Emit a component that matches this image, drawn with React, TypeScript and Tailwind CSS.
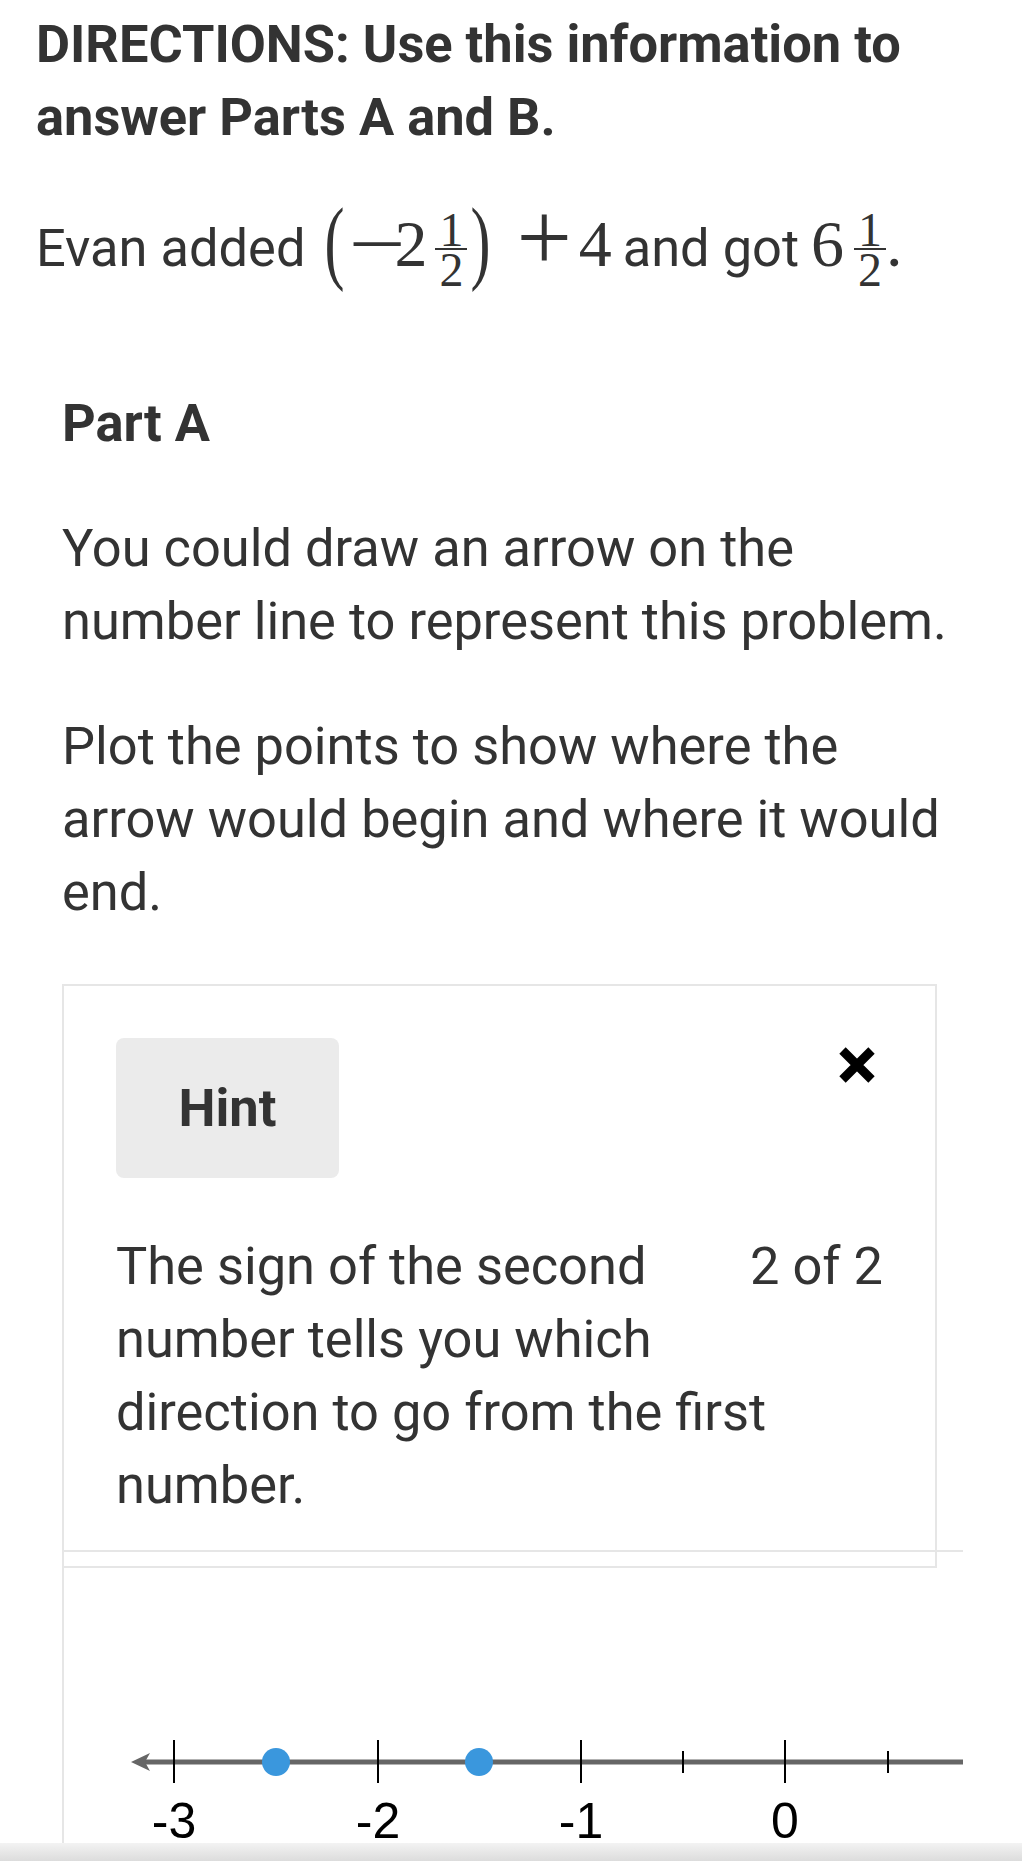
function Frac({ n, d, className }: { n: string; d: string; className: string }) {
  return (
    <span
      className={`inline-flex -mb-[6px] flex-col items-center align-[20px] font-['Liberation_Serif',serif] text-[48px] leading-[36px] ${className}`}
    >
      <span className="px-[4px]">{n}</span>
      <span className="h-[2px] w-full bg-[#333]" />
      <span className="mt-[2px] px-[4px]">{d}</span>
    </span>
  );
}

function CloseIcon() {
  return (
    <svg width="36" height="36" viewBox="0 0 36 36" className="mt-[9px] mr-[8px] shrink-0">
      <path d="M3.5 3.5 L32.5 32.5 M32.5 3.5 L3.5 32.5" stroke="#000" strokeWidth="9" />
    </svg>
  );
}

function NumberLine() {
  const major = [
    { x: 110, label: "-3" },
    { x: 314, label: "-2" },
    { x: 517, label: "-1" },
    { x: 721, label: "0" },
  ];
  const minor = [619, 824];
  return (
    <svg width="899" height="291" viewBox="0 0 899 291" overflow="visible" className="block">
      <line x1="78" y1="210" x2="899" y2="210" stroke="#666" strokeWidth="5" />
      <path d="M67 210 L86 201 L81 210 L86 219 Z" fill="#666" />
      {major.map((t) => (
        <g key={t.label}>
          <line x1={t.x} y1="188" x2={t.x} y2="231" stroke="#000" strokeWidth="2" />
          <text
            x={t.x}
            y="286"
            textAnchor="middle"
            fontFamily="'Liberation Sans', Arial, sans-serif"
            fontSize="50"
            fill="#000"
          >
            {t.label}
          </text>
        </g>
      ))}
      {minor.map((x) => (
        <line key={x} x1={x} y1="199" x2={x} y2="221" stroke="#000" strokeWidth="2" />
      ))}
      <circle cx="212" cy="210" r="14" fill="#3a97dd" />
      <circle cx="415" cy="210" r="14" fill="#3a97dd" />
    </svg>
  );
}

export default function App() {
  return (
    <div className="flex h-[1861px] flex-col overflow-hidden bg-white font-['Roboto',sans-serif] text-[#333]">
      <div className="px-[36px] pt-[8px]">
        <h1 className="text-[52.4px] font-bold leading-[73px]">
          DIRECTIONS: Use this information to answer Parts A and B.
        </h1>
        <p className="mt-[57px] h-[73px] whitespace-nowrap text-[52.4px] leading-[73px]">
          Evan added
          <span className="ml-[19px] inline-block align-[5px] scale-y-[1.55] font-['Liberation_Serif',serif] text-[60px] leading-none">
            (
          </span>
          <span className="ml-[11px] inline-block translate-y-[4px] scale-x-[1.3] font-['Liberation_Serif',serif] text-[78px] leading-[0]">
            −
          </span>
          <span className="-ml-[5px] font-['Liberation_Serif',serif] text-[66px] leading-[0]">2</span>
          <Frac n="1" d="2" className="ml-[8px]" />
          <span className="ml-[3px] inline-block align-[5px] scale-y-[1.55] font-['Liberation_Serif',serif] text-[60px] leading-none">
            )
          </span>
          <span className="ml-[31px] inline-block scale-[1.2] font-['Liberation_Serif',serif] text-[82px] leading-[0]">
            +
          </span>
          <span className="ml-[11px] font-['Liberation_Serif',serif] text-[66px] leading-[0]">4</span>
          <span className="ml-[11px]">and got</span>
          <span className="ml-[12px] font-['Liberation_Serif',serif] text-[66px] leading-[0]">6</span>
          <Frac n="1" d="2" className="ml-[10px]" />
          <span className="font-['Liberation_Serif',serif] text-[66px] leading-[0]">.</span>
        </p>
      </div>

      <div className="ml-[62px] flex w-[901px] flex-1 flex-col">
        <h2 className="mt-[103px] text-[52.4px] font-bold leading-[73px]">Part A</h2>
        <p className="mt-[52px] text-[52.4px] leading-[73px]">
          You could draw an arrow on the number line to represent this problem.
        </p>
        <p className="mt-[52px] text-[52.4px] leading-[73px]">
          Plot the points to show where the arrow would begin and where it would end.
        </p>

        <div className="mt-[55px] w-[875px] border-2 border-[#e6e6e6] bg-white px-[52px] pt-[52px] pb-[44px]">
          <div className="flex items-start justify-between">
            <button className="flex h-[140px] w-[223px] items-center justify-center rounded-[8px] bg-[#ebebeb] text-[52.4px] font-bold leading-[73px] text-[#333]">
              Hint
            </button>
            <CloseIcon />
          </div>
          <div className="relative mt-[52px]">
            <p className="w-[660px] text-[52.4px] leading-[73px]">
              The sign of the second number tells you which direction to go from the first number.
            </p>
            <span className="absolute top-0 right-0 text-[52.4px] leading-[73px]">2 of 2</span>
          </div>
        </div>

        <div className="-mt-[18px] flex-1 border-t-2 border-l-2 border-[#e6e6e6]">
          <NumberLine />
        </div>
      </div>

      <div className="h-[18px] shrink-0 bg-gradient-to-b from-[#f3f3f3] to-[#dcdcdc]" />
    </div>
  );
}
